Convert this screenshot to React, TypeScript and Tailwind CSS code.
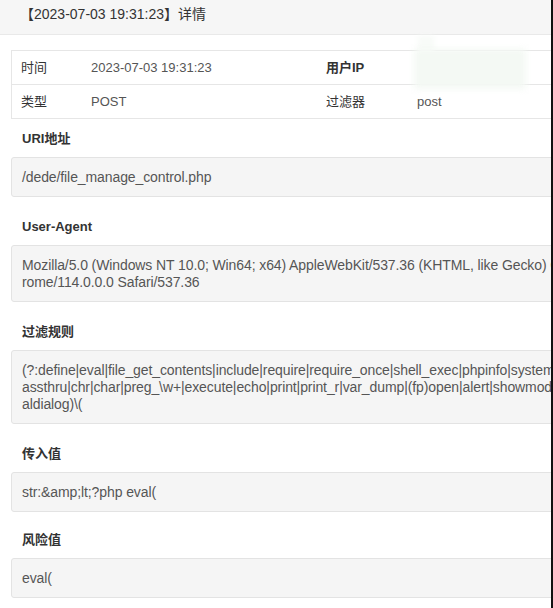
const infoRows = [
  { label: "时间", value: "2023-07-03 19:31:23", label2: "用户IP", value2: "", bold2: true },
  { label: "类型", value: "POST", label2: "过滤器", value2: "post", bold2: false },
];

const sections = [
  { title: "URI地址", lines: ["/dede/file_manage_control.php"] },
  {
    title: "User-Agent",
    lines: [
      "Mozilla/5.0 (Windows NT 10.0; Win64; x64) AppleWebKit/537.36 (KHTML, like Gecko) Ch",
      "rome/114.0.0.0 Safari/537.36",
    ],
  },
  {
    title: "过滤规则",
    lines: [
      "(?:define|eval|file_get_contents|include|require|require_once|shell_exec|phpinfo|system|p",
      "assthru|chr|char|preg_\\w+|execute|echo|print|print_r|var_dump|(fp)open|alert|showmod",
      "aldialog)\\(",
    ],
  },
  { title: "传入值", lines: ["str:&amp;lt;?php eval("] },
  { title: "风险值", lines: ["eval("] },
];

export default function App() {
  return (
    <div className="flex h-[608px] w-[553px] overflow-hidden bg-white font-['Liberation_Sans','Noto_Sans_CJK_SC',sans-serif]">
      <div className="relative w-[551px] shrink-0 overflow-hidden">
        <div className="w-[640px]">
          {/* Header */}
          <div className="h-[35px] border-b border-[#e9e9e9] bg-[#f6f6f6] pl-[20px] pt-[4px] text-[14px] leading-[20px] text-[#333]">
            【2023-07-03 19:31:23】详情
          </div>

          <div className="px-[11px] pt-[15px]">
            {/* Info table */}
            <div className="border border-[#e6e6e6] text-[13px] text-[#333]">
              {infoRows.map((row, i) => (
                <div
                  key={row.label}
                  className={`grid grid-cols-[70px_235px_91px_1fr] items-center ${
                    i === 0 ? "h-[34px] border-b border-[#e6e6e6]" : "h-[33px]"
                  }`}
                >
                  <div className="pl-[9px]">{row.label}</div>
                  <div className="pl-[9px] text-[#555]">{row.value}</div>
                  <div className={`pl-[9px] ${row.bold2 ? "font-bold" : ""}`}>{row.label2}</div>
                  <div className="pl-[9px] text-[#555]">{row.value2}</div>
                </div>
              ))}
            </div>

            {/* Detail sections */}
            {sections.map((s, i) => (
              <div key={s.title} className={i === 0 ? "mt-[10px]" : i === 4 ? "mt-[18px]" : "mt-[20px]"}>
                <div className="pl-[11px] text-[13px] font-bold leading-[20px] text-[#333]">{s.title}</div>
                <div className="mt-[8px] rounded-[3px] border border-[#e3e3e3] bg-[#f5f5f5] pb-[10px] pl-[10px] pt-[11px] text-[14px] leading-[17px] tracking-[-0.1px] text-[#555]">
                  {s.lines.map((line) => (
                    <div key={line} className="whitespace-nowrap">
                      {line}
                    </div>
                  ))}
                </div>
              </div>
            ))}
          </div>
        </div>

        {/* redacted IP blur */}
        <div className="absolute left-[418px] top-[36px] h-[16px] w-[16px] bg-[#f8fbf8] blur-[2px]" />
        <div className="absolute left-[414px] top-[49px] h-[40px] w-[112px] bg-[#f4f9f4] blur-[3px]" />
      </div>
      <div className="w-[2px] shrink-0 bg-[#111]" />
    </div>
  );
}
